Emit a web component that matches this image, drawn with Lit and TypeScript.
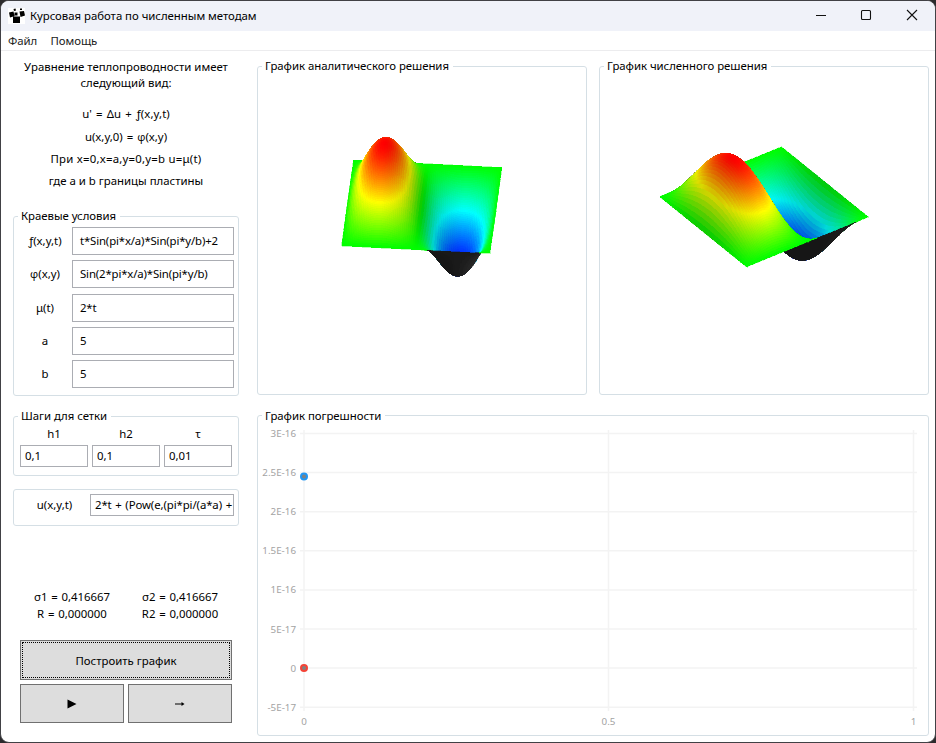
import { LitElement, html, svg, css } from "lit";
import { customElement, property } from "lit/decorators.js";

type Pt = [number, number];

interface View {
  origin: Pt;
  u: Pt;
  v: Pt;
  height: number;
  light: number;
}

@customElement("surface-plot")
class SurfacePlot extends LitElement {
  @property({ attribute: false }) view!: View;

  static styles = css`
    :host { display: block; height: 100%; }
    svg { display: block; width: 100%; height: 100%; }
  `;

  private mesh() {
    const { origin, u, v, height, light } = this.view;
    const nu = 80, nv = 110;
    const z = (a: number, b: number) => Math.sin(2 * Math.PI * a) * Math.sin(Math.PI * b);
    const project = (a: number, b: number): Pt => [
      origin[0] + u[0] * a + v[0] * b,
      origin[1] + u[1] * a + v[1] * b - height * z(a, b),
    ];
    const cells: { depth: number; points: string; fill: string }[] = [];
    for (let i = 0; i < nu; i++) {
      for (let j = 0; j < nv; j++) {
        const a0 = i / nu, a1 = (i + 1) / nu, b0 = j / nv, b1 = (j + 1) / nv;
        const q = [project(a0, b0), project(a1, b0), project(a1, b1), project(a0, b1)];
        const area =
          (q[2][0] - q[0][0]) * (q[3][1] - q[1][1]) - (q[2][1] - q[0][1]) * (q[3][0] - q[1][0]);
        const a = (a0 + a1) / 2, b = (b0 + b1) / 2;
        const slope = Math.cos(2 * Math.PI * a) * Math.sin(Math.PI * b);
        let fill: string;
        if (area < 0) {
          const g = Math.round(22 + 34 * Math.max(0, Math.min(1, slope * 0.9 + 0.1)));
          fill = `rgb(${g},${g},${g})`;
        } else {
          const shade = 1 - 0.2 * Math.max(0, slope * light);
          fill = `hsl(${(120 - 120 * z(a, b)).toFixed(1)} 100% ${(50 * shade).toFixed(1)}%)`;
        }
        cells.push({
          depth: u[1] * a + v[1] * b,
          points: q.map((p) => `${p[0].toFixed(2)},${p[1].toFixed(2)}`).join(" "),
          fill,
        });
      }
    }
    return cells.sort((m, n) => m.depth - n.depth);
  }

  render() {
    return html`<svg viewBox="0 0 328 327" shape-rendering="crispEdges">
      ${this.mesh().map(
        (c) => svg`<polygon points=${c.points} fill=${c.fill} stroke=${c.fill} stroke-width="0.3" />`
      )}
    </svg>`;
  }
}

@customElement("error-chart")
class ErrorChart extends LitElement {
  static styles = css`
    :host { display: block; height: 100%; }
    svg { display: block; width: 100%; height: 100%; }
    text { font: 9.8px "Noto Sans", sans-serif; fill: #a3a3a3; }
    .grid { stroke: #f3f3f3; stroke-width: 1.5; }
    .blue { fill: #808080; stroke: #2196f3; stroke-width: 2; }
    .red { fill: #808080; stroke: #f44336; stroke-width: 2; }
  `;

  render() {
    const rows = ["3E-16", "2.5E-16", "2E-16", "1.5E-16", "1E-16", "5E-17", "0", "-5E-17"];
    const cols: [string, number][] = [["0", 304], ["0.5", 608.5], ["1", 913.5]];
    const y = (i: number) => 433.5 + i * 39.1;
    return html`<svg viewBox="258 416 670 319">
      ${rows.map(
        (label, i) => svg`
          <line class="grid" x1="300" x2="917" y1=${y(i)} y2=${y(i)} />
          <text x="296" y=${y(i) + 3.5} text-anchor="end">${label}</text>`
      )}
      ${cols.map(
        ([label, x]) => svg`
          <line class="grid" x1=${x} x2=${x} y1="430" y2="711" />
          <text x=${x} y="725" text-anchor="middle">${label}</text>`
      )}
      <circle class="blue" cx="304" cy="476.5" r="3" />
      <circle class="red" cx="304" cy="668" r="3" />
    </svg>`;
  }
}

@customElement("app-root")
class AppRoot extends LitElement {
  static styles = css`
    :host {
      display: block;
      width: 936px;
      height: 743px;
      background: #2c2b2d;
      overflow: hidden;
      font: 11.4px/16px "Noto Sans", sans-serif;
      color: #000;
    }
    * { box-sizing: border-box; }
    .window {
      height: 743px;
      border: 1px solid #414145;
      border-radius: 9px;
      background: #fff;
      overflow: hidden;
    }
    .titlebar {
      height: 30px;
      background: #f0f2f9;
      display: flex;
      align-items: center;
      padding-left: 7px;
    }
    .app-icon { width: 18px; height: 16px; margin-right: 4px; }
    .title { flex: 1; letter-spacing: -0.03px; }
    .controls { width: 136px; height: 30px; }
    .menu {
      height: 20px;
      border-bottom: 1px solid #ececee;
      display: flex;
      gap: 13.5px;
      padding-left: 7px;
      line-height: 20px;
      letter-spacing: -0.08px;
      color: #212121;
    }
    .content { display: flex; height: 691px; }
    .side { width: 256px; padding: 8px 18px 0 12px; display: flex; flex-direction: column; }
    .intro { text-align: center; }
    .eq { margin-top: 6px; }
    .eq.first { margin-top: 15px; word-spacing: 1px; letter-spacing: 0.1px; }
    .eq.second { margin-top: 7px; word-spacing: 1px; }
    .eq.loose { letter-spacing: 0.22px; }
    .phi { font-family: "Open Sans", sans-serif; }
    .group { border: 1px solid #d5dfe5; border-radius: 3px; }
    .legend {
      width: fit-content;
      height: 16px;
      margin: -9px 0 0 4px;
      padding: 0 4px 0 3px;
      background: #fff;
      white-space: nowrap;
      letter-spacing: -0.04px;
    }
    .conditions { height: 180px; margin-top: 27px; }
    .fields { padding: 3px 4px 0 0; display: grid; gap: 5.25px; }
    .field { display: grid; grid-template-columns: 58px 162px; height: 28px; align-items: center; }
    .field .name { text-align: center; padding-left: 4px; }
    .box {
      border: 1px solid #abadb3;
      background: #fff;
      white-space: nowrap;
      overflow: hidden;
      display: flex;
      align-items: center;
    }
    .field .box { height: 28px; padding-left: 7px; letter-spacing: -0.15px; }
    .steps { height: 60px; margin-top: 20px; }
    .step-grid { display: grid; grid-template-columns: repeat(3, 68px); gap: 0 4px; padding: 2px 0 0 6px; }
    .step-grid .name { text-align: center; height: 19px; }
    .step-grid .box { height: 22px; padding-left: 4px; }
    .exact {
      height: 37px;
      margin-top: 13px;
      display: flex;
      align-items: center;
      padding: 0 4px 5px 0;
    }
    .exact .name { width: 76px; padding-left: 5px; text-align: center; }
    .exact .box { flex: 1; height: 22px; padding-left: 4px; word-spacing: 0.8px; letter-spacing: -0.1px; }
    .results {
      margin-top: 62px;
      display: grid;
      grid-template-columns: 108px 108px;
      justify-content: center;
      line-height: 17px;
      text-align: center;
      word-spacing: 0.8px;
    }
    .actions { margin: 18px 7px 0; display: grid; grid-template-columns: 1fr 1fr; gap: 4px; }
    .btn {
      height: 39px;
      border: 1px solid #707070;
      background: #ddd;
      display: flex;
      align-items: center;
      justify-content: center;
    }
    .btn.wide { grid-column: span 2; height: 40px; padding: 1px; }
    .focus {
      flex: 1;
      height: 36px;
      padding-top: 1px;
      border: 1px dotted #000;
      display: flex;
      align-items: center;
      justify-content: center;
    }
    .charts {
      display: grid;
      grid-template-columns: 330px 330px;
      grid-template-rows: 329px 321px;
      gap: 20px 12px;
      padding-top: 15px;
    }
    .panel { display: flex; flex-direction: column; }
    .panel .legend { margin-bottom: -7px; z-index: 1; }
    .panel surface-plot, .panel error-chart { flex: none; }
    .span { grid-column: span 2; }
    .span .legend { margin-top: -8px; margin-bottom: -8px; }
  `;

  private analytic: View = { origin: [95.5, 93], u: [148.5, 7.5], v: [-12, 86], height: 61.5, light: -1 };
  private numeric: View = { origin: [59.5, 129.7], u: [122, -50], v: [87, 70.3], height: 61.5, light: 1 };

  private conditions = [
    [html`ƒ(x,y,t)`, "t*Sin(pi*x/a)*Sin(pi*y/b)+2"],
    [html`<span class="phi">φ</span>(x,y)`, "Sin(2*pi*x/a)*Sin(pi*y/b)"],
    [html`μ(t)`, "2*t"],
    [html`a`, "5"],
    [html`b`, "5"],
  ];

  render() {
    return html`
      <div class="window">
        <div class="titlebar">
          <svg class="app-icon" viewBox="0 0 18 16">
            <rect x="0" y="0" width="17" height="16" fill="#fff" />
            <path d="M1 4.500l4.500-1 1 4.500-4.500 1.500zM5 8.500h7v6.500H5zM11.500 3.500l4.500-.5 1 4.500-4.500 1.500zM6.500 4.500h3v3h-3zM5.500 1l2-.5.5 2-2 .5zM12 .5h2v1.500h-2z" />
          </svg>
          <span class="title">Курсовая работа по численным методам</span>
          <svg class="controls" viewBox="799 1 136 30" fill="none" stroke="#111" stroke-width="1.100">
            <path d="M816 15.500h10" />
            <rect x="861.500" y="10.500" width="9" height="9" rx="1" />
            <path d="M907 10l10 10M917 10l-10 10" />
          </svg>
        </div>
        <div class="menu"><span>Файл</span><span>Помощь</span></div>
        <div class="content">
          <div class="side">
            <div class="intro">
              <div>Уравнение теплопроводности имеет<br />следующий вид:</div>
              <div class="eq first">u' = Δu + ƒ(x,y,t)</div>
              <div class="eq second">u(x,y,0) = <span class="phi">φ</span>(x,y)</div>
              <div class="eq loose">При x=0,x=a,y=0,y=b u=μ(t)</div>
              <div class="eq">где a и b границы пластины</div>
            </div>
            <div class="group conditions">
              <div class="legend">Краевые условия</div>
              <div class="fields">
                ${this.conditions.map(
                  ([name, value]) => html`<div class="field">
                    <span class="name">${name}</span><span class="box">${value}</span>
                  </div>`
                )}
              </div>
            </div>
            <div class="group steps">
              <div class="legend">Шаги для сетки</div>
              <div class="step-grid">
                <span class="name">h1</span><span class="name">h2</span><span class="name">τ</span>
                <span class="box">0,1</span><span class="box">0,1</span><span class="box">0,01</span>
              </div>
            </div>
            <div class="group exact">
              <span class="name">u(x,y,t)</span>
              <span class="box">2*t + (Pow(e,(pi*pi/(a*a) +</span>
            </div>
            <div class="results">
              <span>σ1 = 0,416667</span><span>σ2 = 0,416667</span>
              <span>R = 0,000000</span><span>R2 = 0,000000</span>
            </div>
            <div class="actions">
              <div class="btn wide"><div class="focus">Построить график</div></div>
              <div class="btn">
                <svg width="10" height="10" viewBox="0 0 10 10"><path d="M.5 .5l9 4.500-9 4.500z" /></svg>
              </div>
              <div class="btn">
                <svg width="10" height="6" viewBox="0 0 10 6"><path d="M0 2.500h6.500V1l3 2-3 2V3.500H0z" /></svg>
              </div>
            </div>
          </div>
          <div class="charts">
            <div class="group panel">
              <div class="legend">График аналитического решения</div>
              <surface-plot .view=${this.analytic}></surface-plot>
            </div>
            <div class="group panel">
              <div class="legend">График численного решения</div>
              <surface-plot .view=${this.numeric}></surface-plot>
            </div>
            <div class="group panel span">
              <div class="legend">График погрешности</div>
              <error-chart></error-chart>
            </div>
          </div>
        </div>
      </div>
    `;
  }
}
